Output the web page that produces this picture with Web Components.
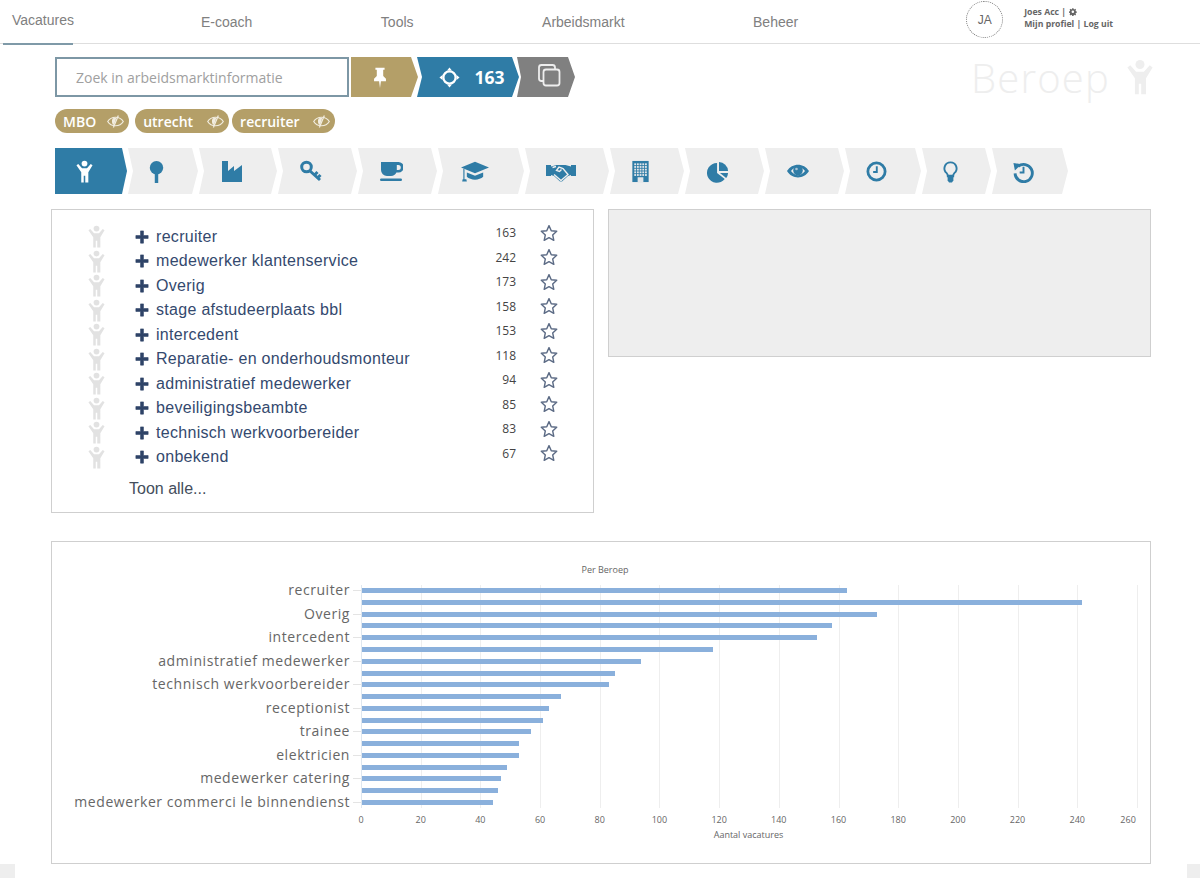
<!DOCTYPE html>
<html lang="nl">
<head>
<meta charset="utf-8">
<title>Beroep</title>
<style>
  html, body { margin: 0; background: #fff; }
  body { font-family: "Open Sans", "Liberation Sans", sans-serif; color: #555; }
  main { display: block; padding: 0 49px 0 51px; }
</style>
</head>
<body>
<top-nav>
  <a slot="active">Vacatures</a>
  <a>E-coach</a>
  <a>Tools</a>
  <a>Arbeidsmarkt</a>
  <a>Beheer</a>
</top-nav>
<main>
  <search-row count="163" title-text="Beroep"></search-row>
  <chip-row>
    <filter-chip style="--chip-gap:11px;margin-right:6px">MBO</filter-chip>
    <filter-chip style="--chip-gap:14px;margin-right:3px">utrecht</filter-chip>
    <filter-chip>recruiter</filter-chip>
  </chip-row>
  <tab-strip></tab-strip>
  <panel-row>
    <job-list></job-list>
    <empty-panel></empty-panel>
  </panel-row>
  <job-chart></job-chart>
</main>
<page-foot></page-foot>

<script>
// buildings windows are a lot of small squares
let windows = "";
for (let y = 3.500; y < 16; y += 2.800) {
  for (let x = 5.500; x < 18; x += 2.800) {
    windows += `<rect x="${x}" y="${y}" width="1.900" height="1.900" fill="#e3e6e9"/>`;
  }
}

const icons = {
  person: `<circle cx="12" cy="3.700" r="3"/><path d="M3.600 5.600 5.500 4.200 9.400 8.500h5.200l3.900-4.300 1.900 1.400-4.400 7.200V23.500h-3.200v-7h-1.600v7H8.600V12.800z"/>`,
  lollipop: `<circle cx="12" cy="8" r="7"/><rect x="10.200" y="14" width="3.600" height="10"/>`,
  factory: `<path d="M2 2h6v10l6-5v5l8-6v17H2z"/>`,
  key: `<circle cx="7.500" cy="8" r="4.800" fill="none" stroke="currentColor" stroke-width="3"/><path d="M10.500 11.500 21 21M15.500 16l3-3M18.500 19l3-3" fill="none" stroke="currentColor" stroke-width="3"/>`,
  cup: `<path fill-rule="evenodd" d="M3 3h17.500a4.500 4.500 0 0 1 0 10.500h-2.100A6 6 0 0 1 13 17H9a6 6 0 0 1-6-6zM18.800 6v5h1.500a2.500 2.500 0 0 0 0-5z" transform="translate(-1 0)"/><rect x="1" y="19.500" width="22" height="2.500" rx="1.200"/>`,
  cap: `<path d="M12 4 24 9 12 14 0 9zM5 13.200V17c3 3.200 11 3.200 14 0v-3.800L12 16zM2 10l1 .4V19h1.600l.4 2H1l.4-2H2z"/>`,
  handshake: `<rect x="0" y="6" width="5" height="11"/><rect x="25" y="6" width="5" height="11"/><path d="M5 7.500 10.500 6h9L25 7.500V16l-3 1-6 5.500h-2L8 17l-3-1z"/><path d="M8 15.500 15 21.500 22 15.500 17 9.500 13 8 10.500 11.500 13.500 12.500 15.500 10.500M6.500 8.500 10 7.500" fill="none" stroke="#eee" stroke-width="1.400"/>`,
  building: `<rect x="3.500" y="1" width="17" height="22" fill="currentColor"/>${windows}<rect x="9" y="18" width="6" height="5" fill="#e3e6e9"/>`,
  pie: `<path d="M10.500 3.200V13.500l8 6.200A10.300 10.300 0 1 1 10.500 3.200z"/><path d="M12.500 2A10 10 0 0 1 22 11.500h-9.500z"/><path d="M13.500 13.500H22a10 10 0 0 1-2 5.300z"/>`,
  eye: `<path fill-rule="evenodd" d="M1 12c5-8.500 17-8.500 22 0-5 8.500-17 8.500-22 0zm4 0c4 5.500 10 5.500 14 0-4-5.500-10-5.500-14 0z"/><circle cx="12" cy="11.500" r="4.800"/><circle cx="10.500" cy="10" r="1.300" fill="#a9c4d6"/>`,
  clock: `<circle cx="12" cy="12" r="9" fill="none" stroke="currentColor" stroke-width="2.900"/><path d="M13.300 6.500v7H8.500v-2h2.800v-5z"/>`,
  bulb: `<path d="M12 2.500a6.300 6.300 0 0 0-4 11.200c1 1 1.200 2 1.200 3.300h5.600c0-1.300.2-2.300 1.200-3.300a6.300 6.300 0 0 0-4-11.200z" fill="none" stroke="currentColor" stroke-width="2"/><path d="M9 15.500h6v6l-1.500 2h-3L9 21.500z"/>`,
  history: `<path d="M6.300 6.800A9 9 0 1 1 3.200 14" fill="none" stroke="currentColor" stroke-width="3"/><path d="M1.500 3 9.500 4.500 3 11zM13 7v7H8v-2h3V7z"/>`,
  pin: `<path d="M7 2h10v2.200h-1.500V11l3 3v2.500H13l-1 7.500-1-7.500H5.500V14l3-3V4.200H7z"/>`,
  target: `<circle cx="12" cy="12" r="7" fill="none" stroke="currentColor" stroke-width="2.600"/><path d="M12 .5l2.800 3.500H9.200zM12 23.500 9.200 20h5.600zM.5 12 4 9.200v5.600zM23.500 12 20 14.800V9.200z"/>`,
  copy: `<rect x="2" y="2" width="16" height="16" rx="2.500" fill="none" stroke="currentColor" stroke-width="1.800"/><rect x="6.500" y="6.500" width="16" height="16" rx="2.500" fill="#808080" stroke="currentColor" stroke-width="1.800"/>`,
  hidden: `<path d="M1 12c5-8 17-8 22 0-5 8-17 8-22 0z" fill="none" stroke="currentColor" stroke-width="1.700"/><path d="M7 12c0-6 3-5 6-5l-3 10C8 16 7 15 7 12z"/><path d="M16 3.500 9 20.500" fill="none" stroke="currentColor" stroke-width="1.800"/>`,
  star: `<path d="M12 2.200l3 6.700 7.300.8-5.400 4.900 1.500 7.200L12 18.200l-6.400 3.600 1.500-7.200-5.400-4.900 7.300-.8z" fill="none" stroke="currentColor" stroke-width="1.900" stroke-linejoin="round"/>`,
  plus: `<path d="M9.500 1.500h5v8h8v5h-8v8h-5v-8h-8v-5h8z" stroke="currentColor" stroke-linejoin="round"/>`,
  gear: `<path fill-rule="evenodd" d="M10 1h4l.6 3 2.200.9 2.600-1.700 2.800 2.800-1.700 2.600.9 2.200 3 .6v4l-3 .6-.9 2.200 1.700 2.600-2.800 2.800-2.600-1.700-2.200.9-.6 3h-4l-.6-3-2.200-.9-2.600 1.700-2.800-2.800 1.700-2.600-.9-2.200-3-.6v-4l3-.6.9-2.200L1.800 6l2.800-2.800 2.600 1.700 2.200-.9zm2 7a4 4 0 1 0 0 8 4 4 0 0 0 0-8z" transform="translate(0 -.500) scale(.96)"/>`,
};

class UxIcon extends HTMLElement {
  connectedCallback() {
    const name = this.getAttribute("name");
    const box = name === "handshake" ? "0 0 30 24" : "0 0 24 24";
    this.attachShadow({ mode: "open" }).innerHTML = `
      <style>
        :host { display: inline-flex; width: var(--size, 20px); height: var(--size, 20px); flex: none; }
        svg { width: 100%; height: 100%; fill: currentColor; display: block; }
      </style>
      <svg viewBox="${box}" aria-hidden="true">${icons[name]}</svg>`;
  }
}
customElements.define("ux-icon", UxIcon);

class TopNav extends HTMLElement {
  constructor() {
    super();
    this.attachShadow({ mode: "open" }).innerHTML = `
      <style>
        :host {
          display: flex; height: 43px; border-bottom: 1px solid #dedede;
          align-items: stretch; gap: 128px; padding-left: 3px;
          font: 14px "Liberation Sans", Arial, sans-serif; color: #808080;
        }
        .active {
          display: flex; align-items: center; padding: 0 0 4px 9px;
          width: 61px; box-shadow: 0 1px 0 #7f9aa8; border-bottom: 1px solid #7f9aa8;
          margin-bottom: -1px; white-space: nowrap;
        }
        .items { display: flex; gap: 128.500px; align-items: center; padding-top: 1px; }
        .user {
          display: flex; align-items: flex-start; gap: 21px;
          margin-left: 40px; padding-top: 1px;
        }
        .avatar {
          width: 35px; height: 35px; border: 1px dotted #777; border-radius: 50%;
          display: flex; align-items: center; justify-content: center; font-size: 12px; color: #666;
        }
        .who {
          font: 700 8.700px/12px "Open Sans", sans-serif; color: #666;
          padding-top: 5px; display: flex; flex-direction: column;
        }
        .who span { display: flex; align-items: center; gap: 3px; }
        ux-icon { --size: 8px; }
      </style>
      <div class="active"><slot name="active"></slot></div>
      <div class="items"><slot></slot></div>
      <div class="user">
        <div class="avatar">JA</div>
        <div class="who">
          <span>Joes Acc | <ux-icon name="gear"></ux-icon></span>
          <span>Mijn profiel | Log uit</span>
        </div>
      </div>`;
  }
}
customElements.define("top-nav", TopNav);

class SearchRow extends HTMLElement {
  connectedCallback() {
    const count = this.getAttribute("count");
    const title = this.getAttribute("title-text");
    this.attachShadow({ mode: "open" }).innerHTML = `
      <style>
        :host { display: flex; align-items: stretch; height: 40px; margin: 13px 0 0 4px; }
        .search {
          width: 294px; box-sizing: border-box; border: 2px solid #7d97a5;
          display: flex; align-items: center; padding-left: 19px;
          font-size: 14px; color: #a0a0a0; margin-right: 2px;
        }
        .step {
          display: flex; align-items: center; justify-content: center; color: #fff; box-sizing: border-box;
          clip-path: polygon(0 0, calc(100% - 7px) 0, 100% 50%, calc(100% - 7px) 100%, 0 100%, var(--notch, 0) 50%);
        }
        .pin { width: 67px; background: #b49f68; --notch: 0px; padding-right: 9px; --size: 22px; }
        .count {
          width: 102px; background: #2f7ca6; --notch: 5px; gap: 14px; margin-left: -1px; padding-left: 8px;
          font-size: 17.500px; font-weight: 700; --size: 21px;
        }
        .copy { width: 58px; background: #808080; --notch: 4px; margin-left: -2px; padding: 0 0 4px 6px; --size: 24px; color: #eee; }
        .title {
          margin-left: auto; display: flex; align-items: center; gap: 12px;
          font-size: 40px; font-weight: 300; color: #eeeeee; letter-spacing: 1.200px;
        }
        .title ux-icon { --size: 36px; margin-right: -7px; }
      </style>
      <div class="search">Zoek in arbeidsmarktinformatie</div>
      <div class="step pin"><ux-icon name="pin"></ux-icon></div>
      <div class="step count"><ux-icon name="target"></ux-icon><span>${count}</span></div>
      <div class="step copy"><ux-icon name="copy"></ux-icon></div>
      <div class="title"><span>${title}</span><ux-icon name="person"></ux-icon></div>`;
  }
}
customElements.define("search-row", SearchRow);

class ChipRow extends HTMLElement {
  constructor() {
    super();
    this.attachShadow({ mode: "open" }).innerHTML = `
      <style>:host { display: flex; margin: 12px 0 0 4px; }</style>
      <slot></slot>`;
  }
}
customElements.define("chip-row", ChipRow);

class FilterChip extends HTMLElement {
  constructor() {
    super();
    this.attachShadow({ mode: "open" }).innerHTML = `
      <style>
        :host {
          display: inline-flex; align-items: center; gap: var(--chip-gap, 13px); height: 24px;
          padding: 0 5px 0 8px; border-radius: 12px; background: #b49f68;
          color: #fff; font-size: 14px; font-weight: 600;
        }
        ux-icon { --size: 17px; color: #f1ecdf; }
      </style>
      <slot></slot><ux-icon name="hidden"></ux-icon>`;
  }
}
customElements.define("filter-chip", FilterChip);

class TabStrip extends HTMLElement {
  connectedCallback() {
    const tabs = [
      ["person", 72, 23], ["lollipop", 70, 23], ["factory", 78, 24], ["key", 79, 24], ["cup", 79, 24], ["cap", 86, 28],
      ["handshake", 84, 30], ["building", 74, 23], ["pie", 79, 23], ["eye", 79, 24], ["clock", 76, 23], ["bulb", 69, 23], ["history", 76, 23],
    ];
    const cells = tabs.map(([name, w, size], i) =>
      `<div class="tab ${i === 0 ? "on" : ""}" style="width:${w}px;--size:${size}px"><ux-icon name="${name}"></ux-icon></div>`
    ).join("");
    this.attachShadow({ mode: "open" }).innerHTML = `
      <style>
        :host { display: flex; gap: 1px; height: 46px; margin: 15px 0 0 4px; }
        .tab {
          display: flex; align-items: center; justify-content: center; box-sizing: border-box;
          background: #eeeeee; color: #2f7ca6; padding-right: 15px; padding-left: 2px;
          clip-path: polygon(0 0, calc(100% - 6px) 0, 100% 50%, calc(100% - 6px) 100%, 0 100%, 5px 50%);
        }
        .tab.on {
          background: #2f7ca6; color: #fff; padding: 0 14px 0 0;
          clip-path: polygon(0 0, calc(100% - 5px) 0, 100% 50%, calc(100% - 5px) 100%, 0 100%);
        }
      </style>
      ${cells}`;
  }
}
customElements.define("tab-strip", TabStrip);

class PanelRow extends HTMLElement {
  constructor() {
    super();
    this.attachShadow({ mode: "open" }).innerHTML = `
      <style>:host { display: grid; grid-template-columns: 543px 543px; gap: 14px; align-items: start; margin-top: 15px; }</style>
      <slot></slot>`;
  }
}
customElements.define("panel-row", PanelRow);

class JobList extends HTMLElement {
  connectedCallback() {
    const jobs = [
      ["recruiter", 163], ["medewerker klantenservice", 242], ["Overig", 173],
      ["stage afstudeerplaats bbl", 158], ["intercedent", 153], ["Reparatie- en onderhoudsmonteur", 118],
      ["administratief medewerker", 94], ["beveiligingsbeambte", 85], ["technisch werkvoorbereider", 83], ["onbekend", 67],
    ];
    const rows = jobs.map(([name, n]) => `
      <div class="row">
        <ux-icon class="who" name="person"></ux-icon>
        <ux-icon class="plus" name="plus"></ux-icon>
        <span class="name">${name}</span>
        <span class="n">${n}</span>
        <ux-icon class="star" name="star"></ux-icon>
      </div>`).join("");
    this.attachShadow({ mode: "open" }).innerHTML = `
      <style>
        :host {
          display: block; box-sizing: border-box; height: 304px; border: 1px solid #cfcfcf;
          padding-top: 14.500px;
        }
        .row {
          display: grid; grid-template-columns: 48px 20px 1fr 40px 42px;
          align-items: center; height: 24.500px; padding: 0 35px 0 36px;
        }
        .who { --size: 23px; color: #e2e2e2; margin-left: -3px; }
        .plus { --size: 14px; color: #2f4468; margin-left: -1px; }
        .name { font: 16px "Liberation Sans", Arial, sans-serif; color: #34496e; letter-spacing: .3px; white-space: nowrap; }
        .n { font-size: 12px; color: #444; text-align: right; margin-top: -8px; }
        .star { --size: 18px; color: #5c6b85; margin: -8px 0 0 24px; }
        .all { margin: 10.500px 0 0 77px; font: 16px "Liberation Sans", Arial, sans-serif; color: #444e5c; }
      </style>
      ${rows}
      <div class="all">Toon alle...</div>`;
  }
}
customElements.define("job-list", JobList);

class EmptyPanel extends HTMLElement {
  constructor() {
    super();
    this.attachShadow({ mode: "open" }).innerHTML = `
      <style>:host { display: block; box-sizing: border-box; height: 148px; background: #eeeeee; border: 1px solid #cfcfcf; }</style>`;
  }
}
customElements.define("empty-panel", EmptyPanel);

class JobChart extends HTMLElement {
  connectedCallback() {
    const values = [163, 242, 173, 158, 153, 118, 94, 85, 83, 67, 63, 61, 57, 53, 53, 49, 47, 46, 44];
    const labels = ["recruiter", "Overig", "intercedent", "administratief medewerker", "technisch werkvoorbereider",
      "receptionist", "trainee", "elektricien", "medewerker catering", "medewerker commerci le binnendienst"];
    const unit = 2.977;
    const rows = values.map((v, i) => `
      <div class="label">${i % 2 === 0 ? `<span>${labels[i / 2]}</span><i></i>` : ""}</div>
      <div class="cell"><div class="bar" style="width:${(v * unit).toFixed(1)}px"></div></div>`).join("");
    const ticks = [];
    for (let t = 0; t <= 260; t += 20) ticks.push(`<span>${t}</span>`);
    this.attachShadow({ mode: "open" }).innerHTML = `
      <style>
        :host {
          display: block; box-sizing: border-box; height: 323px; margin-top: 28px;
          border: 1px solid #cfcfcf; padding-top: 21px; font-size: 9px; color: #666;
        }
        .title { text-align: center; padding-left: 8px; line-height: 13px; height: 21.800px; }
        .plot { display: grid; grid-template-columns: 309px 777px; grid-auto-rows: 11.780px; }
        .label { display: flex; justify-content: flex-end; align-items: center; gap: 3px; white-space: nowrap; font-size: 14px; letter-spacing: .57px; color: #666; }
        .label span { margin-top: -2px; }
        .label i { width: 8px; height: 1px; background: #e4e4e4; flex: none; }
        .cell {
          display: flex; align-items: center; border-left: 1px solid #dfe7ef; box-sizing: border-box; margin-left: -0.500px;
          background: repeating-linear-gradient(to right, transparent 0 58.700px, #eeeeee 58.700px 59.690px);
        }
        .bar { height: 5px; background: #8ab0dc; }
        .axis { display: flex; margin-left: 279.150px; height: 19px; align-items: center; padding-top: 2px; }
        .axis span { width: 59.690px; text-align: center; flex: none; }
        .axis span:last-child { width: 42px; }
        .name { margin-left: 308px; width: 777px; text-align: center; line-height: 12px; }
      </style>
      <div class="title">Per Beroep</div>
      <div class="plot">${rows}</div>
      <div class="axis">${ticks.join("")}</div>
      <div class="name">Aantal vacatures</div>`;
  }
}
customElements.define("job-chart", JobChart);

class PageFoot extends HTMLElement {
  constructor() {
    super();
    this.attachShadow({ mode: "open" }).innerHTML = `
      <style>
        :host { display: flex; justify-content: space-between; height: 14px; }
        div { background: #eeeeee; width: 15px; }
        div + div { width: 13px; }
      </style>
      <div></div><div></div>`;
  }
}
customElements.define("page-foot", PageFoot);
</script>
</body>
</html>
